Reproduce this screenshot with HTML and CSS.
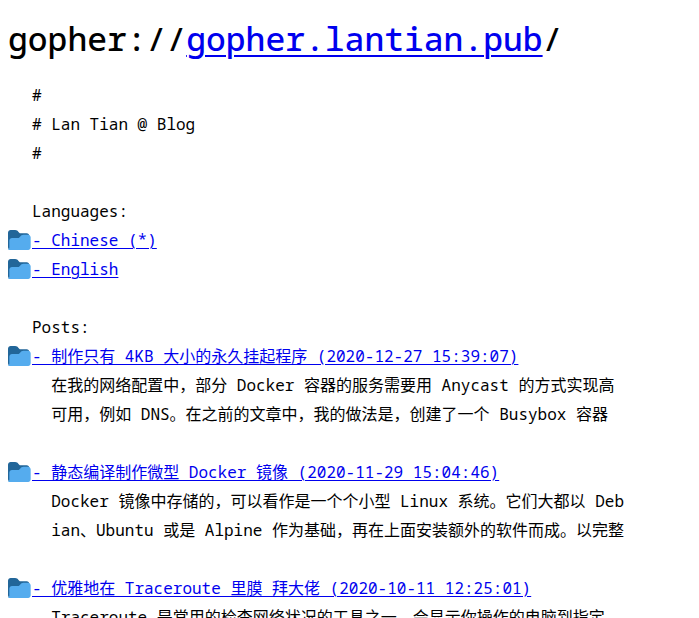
FILE: index.html
```html
<!DOCTYPE html>
<html lang="zh-CN">
<head>
<meta charset="utf-8">
<meta name="viewport" content="width=device-width, initial-scale=1">
<title>gopher.lantian.pub</title>
<link rel="stylesheet" href="styles.css">
</head>
<body>
<svg class="defs" aria-hidden="true">
  <symbol id="folder" viewBox="0 3 36 31.5">
    <path fill="#226699" d="M0 29c0 2.209 1.791 4 4 4h24c2.209 0 4-1.791 4-4V12c0-2.209-1.791-4-4-4h-9c-3.562 0-3-5-8.438-5H4C1.791 3 0 4.791 0 7v22z"/>
    <path fill="#55acee" d="M30 10h-6.562C18 10 18.562 15 15 15H6c-2.209 0-4 1.791-4 4v10c0 2-.5 3.500-2 2c0 1.500 1.500 2 4 2h26c2.209 0 4-1.791 4-4V14c0-2.209-1.791-4-4-4z"/>
  </symbol>
</svg>
<h1>gopher://<a href="#">gopher.lantian.pub</a>/</h1>
<main>
  <p>#</p>
  <p># Lan Tian @ Blog</p>
  <p>#</p>
  <p></p>
  <p>Languages:</p>
  <p class="entry"><svg class="icon" aria-hidden="true"><use href="#folder"/></svg><a href="#">- Chinese (*)</a></p>
  <p class="entry"><svg class="icon" aria-hidden="true"><use href="#folder"/></svg><a href="#">- English</a></p>
  <p></p>
  <p>Posts:</p>
  <p class="entry"><svg class="icon" aria-hidden="true"><use href="#folder"/></svg><a href="#">- 制作只有 4KB 大小的永久挂起程序 (2020-12-27 15:39:07)</a></p>
  <p>  在我的网络配置中，部分 Docker 容器的服务需要用 Anycast 的方式实现高</p>
  <p>  可用，例如 DNS。在之前的文章中，我的做法是，创建了一个 Busybox 容器</p>
  <p></p>
  <p class="entry"><svg class="icon" aria-hidden="true"><use href="#folder"/></svg><a href="#">- 静态编译制作微型 Docker 镜像 (2020-11-29 15:04:46)</a></p>
  <p>  Docker 镜像中存储的，可以看作是一个个小型 Linux 系统。它们大都以 Deb</p>
  <p>  ian、Ubuntu 或是 Alpine 作为基础，再在上面安装额外的软件而成。以完整</p>
  <p></p>
  <p class="entry"><svg class="icon" aria-hidden="true"><use href="#folder"/></svg><a href="#">- 优雅地在 Traceroute 里膜 拜大佬 (2020-10-11 12:25:01)</a></p>
  <p>  Traceroute 是常用的检查网络状况的工具之一，会显示你操作的电脑到指定</p>
</main>
</body>
</html>
```
FILE: styles.css
```css
body {
  margin: 8px;
  background: #fff;
  color: #000;
  font: 16px/29px "Noto Sans Mono", "Droid Sans Mono", "DejaVu Sans Mono", "Noto Sans CJK SC", monospace;
}

.defs {
  display: none;
}

h1 {
  margin: 0;
  padding-bottom: 12px;
  font-size: 33px;
  font-weight: 500;
  line-height: 61px;
}

h1 a {
  text-decoration-thickness: 2px;
  text-underline-offset: 4px;
}

a {
  color: #0000ee;
}

.entry a {
  text-decoration-thickness: 1px;
  text-underline-offset: 2px;
}

p {
  min-height: 29px;
  margin: 0;
  padding-left: 24px;
  white-space: pre;
}

.entry {
  display: flex;
  align-items: center;
  padding-left: 0;
}

.icon {
  flex: none;
  width: 24px;
  height: 21px;
}
```
